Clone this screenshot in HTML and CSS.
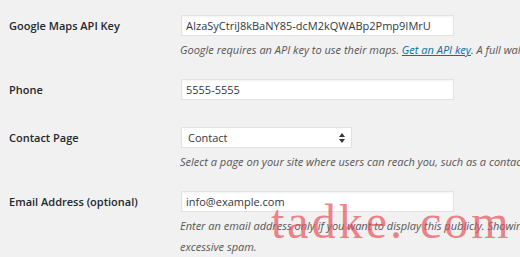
FILE: index.html
```html
<!DOCTYPE html>
<html lang="en">
<head>
    <meta charset="UTF-8">
    <title>Settings</title>
    <link rel="stylesheet" href="styles.css">
</head>
<body>
    <div class="form-table">
        <div class="row">
            <label class="label" for="api-key">Google Maps API Key</label>
            <div class="field">
                <input type="text" id="api-key" class="text-input" value="AIzaSyCtriJ8kBaNY85-dcM2kQWABp2Pmp9IMrU">
                <p class="description">Google requires an API key to use their maps. <a href="#">Get an API key</a>. A full walkthrough is available here.</p>
            </div>
        </div>
        <div class="row">
            <label class="label" for="phone">Phone</label>
            <div class="field">
                <input type="text" id="phone" class="text-input" value="5555-5555">
            </div>
        </div>
        <div class="row">
            <label class="label" for="contact">Contact Page</label>
            <div class="field">
                <div class="select">
                    <span>Contact</span>
                    <svg width="6" height="10" viewBox="0 0 6 10"><path d="M3 0L6 4H0z M3 10L0 6h6z" fill="#32373c"/></svg>
                </div>
                <p class="description">Select a page on your site where users can reach you, such as a contact form.</p>
            </div>
        </div>
        <div class="row">
            <label class="label" for="email">Email Address (optional)</label>
            <div class="field">
                <input type="text" id="email" class="text-input" value="info@example.com">
                <p class="description wrap">Enter an email address only if you want to display this publicly. Showing it may result in excessive spam.</p>
            </div>
        </div>
    </div>
    <div class="watermark">tadke. com</div>
</body>
</html>
```

FILE: styles.css
```css
body {
    margin: 0;
    background-color: #f1f1f1;
    font-family: "Open Sans", "Liberation Sans", sans-serif;
    color: #23282d;
    overflow: hidden;
    width: 520px;
    height: 257px;
    position: relative;
}

.form-table {
    padding: 15px 0 0 9px;
}

.row {
    display: grid;
    grid-template-columns: 172px 1fr;
    margin-bottom: 19px;
}

.row:nth-child(2) {
    margin-bottom: 27px;
}

.label {
    font-weight: 600;
    font-size: 11px;
    line-height: 21px;
}

.field {
    white-space: nowrap;
    min-width: 0;
}

.text-input {
    display: block;
    box-sizing: border-box;
    width: 273px;
    height: 21px;
    margin: 0;
    padding: 0 4px;
    border: 1px solid #e2e2e2;
    box-shadow: inset 0 1px 2px rgba(0, 0, 0, 0.05);
    background: #fff;
    font-family: "Open Sans", sans-serif;
    font-size: 11px;
    color: #32373c;
    outline: none;
}

.select {
    box-sizing: border-box;
    width: 171px;
    height: 21px;
    display: flex;
    align-items: center;
    justify-content: space-between;
    padding: 0 6px;
    border: 1px solid #e2e2e2;
    background: #fff;
    font-size: 11px;
    color: #32373c;
}

.description {
    margin: 3px 0 0 -1px;
    font-size: 11px;
    font-style: italic;
    line-height: 21px;
    color: #555;
}

.description.wrap {
    white-space: normal;
    width: 460px;
}

.description a {
    color: #0073aa;
}

.watermark {
    position: absolute;
    left: 271px;
    top: 194px;
    font-family: "Liberation Serif", serif;
    font-size: 48px;
    letter-spacing: 3px;
    color: rgba(232, 80, 88, 0.7);
    pointer-events: none;
    white-space: nowrap;
}
```
